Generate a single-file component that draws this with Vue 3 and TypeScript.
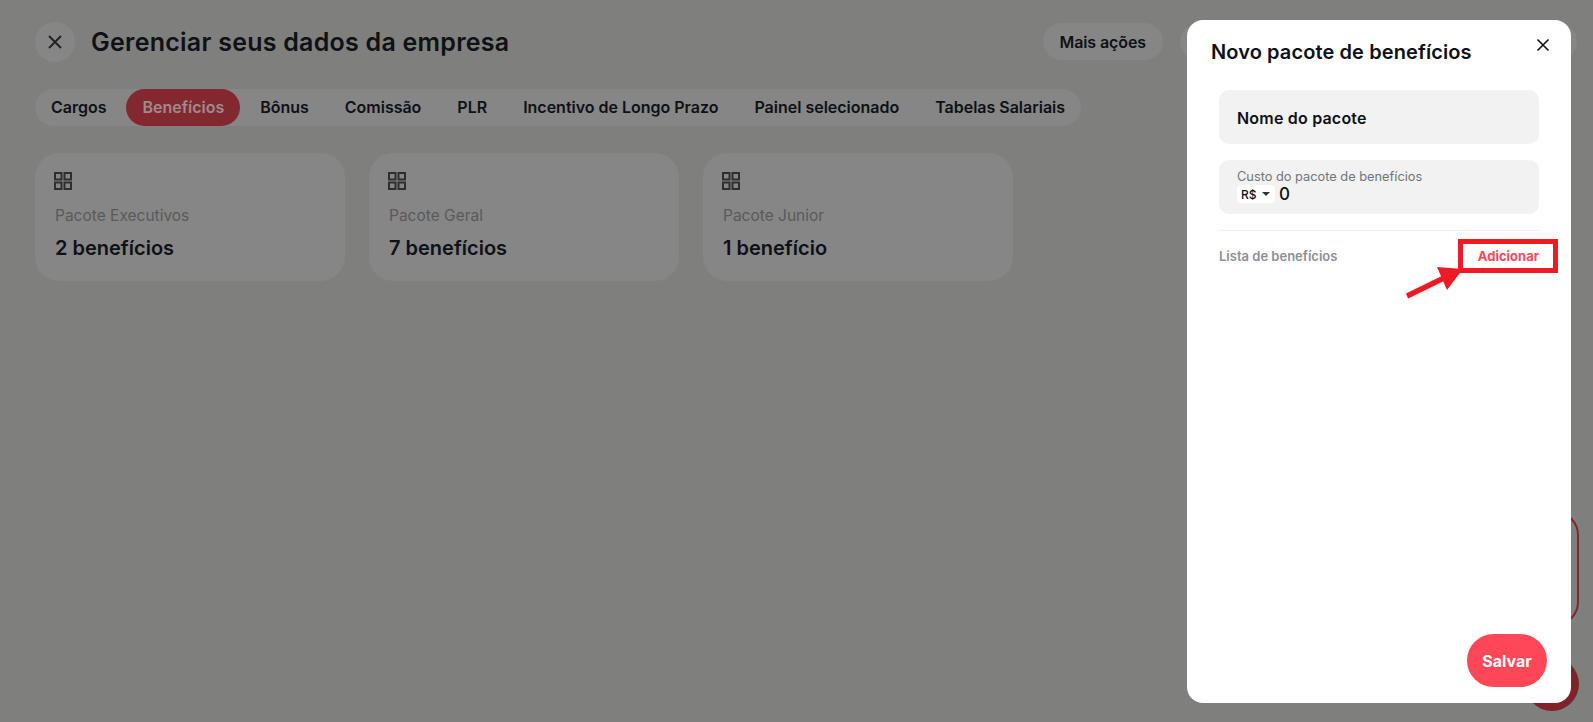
<template>
  <div class="page">
    <header class="top">
      <button class="round-close" aria-label="Fechar">
        <svg width="16" height="16" viewBox="0 0 16 16"><path d="M2 2l12 12M14 2L2 14" /></svg>
      </button>
      <h1 class="title">Gerenciar seus dados da empresa</h1>
      <button class="action">Mais ações</button>
      <button class="action wide" aria-hidden="true"></button>
    </header>

    <nav class="tabs">
      <button v-for="tab in tabs" :key="tab" class="tab" :class="{ active: tab === activeTab }">{{ tab }}</button>
    </nav>

    <section class="cards">
      <article v-for="item in packages" :key="item.name" class="card">
        <svg class="grid-icon" width="18" height="18" viewBox="0 0 18 18">
          <rect x="1" y="1" width="6.5" height="6.5" />
          <rect x="10.5" y="1" width="6.5" height="6.5" />
          <rect x="1" y="10.5" width="6.5" height="6.5" />
          <rect x="10.5" y="10.5" width="6.5" height="6.5" />
        </svg>
        <p class="card-name">{{ item.name }}</p>
        <p class="card-count">{{ item.count }}</p>
      </article>
    </section>

    <div class="behind-outline"></div>
    <div class="behind-fab"></div>

    <div class="overlay">
      <aside class="modal">
        <div class="modal-head">
          <h2>Novo pacote de benefícios</h2>
          <button class="modal-close" aria-label="Fechar">
            <svg width="14" height="14" viewBox="0 0 14 14"><path d="M1.5 1.5l11 11M12.5 1.5l-11 11" /></svg>
          </button>
        </div>

        <div class="modal-body">
          <div class="field name-field">Nome do pacote</div>
          <div class="field cost-field">
            <span class="cost-label">Custo do pacote de benefícios</span>
            <div class="cost-row">
              <span class="currency">R$<i class="caret"></i></span>
              <span class="cost-value">0</span>
            </div>
          </div>
          <div class="list-head">
            <span class="list-title">Lista de benefícios</span>
            <span class="add">Adicionar</span>
          </div>
        </div>

        <div class="modal-foot">
          <button class="save">Salvar</button>
        </div>

        <!-- marcação vermelha por cima do print -->
        <div class="mark-box"></div>
        <svg class="mark-arrow" width="80" height="50" viewBox="0 0 80 50">
          <path class="shaft" d="M1 44L40 25" />
          <path class="head" d="M31 15L57 17L41 38Z" />
        </svg>
      </aside>
    </div>
  </div>
</template>

<script setup lang="ts">
const tabs: string[] = [
  'Cargos',
  'Benefícios',
  'Bônus',
  'Comissão',
  'PLR',
  'Incentivo de Longo Prazo',
  'Painel selecionado',
  'Tabelas Salariais'
]
const activeTab = 'Benefícios'

const packages = [
  { name: 'Pacote Executivos', count: '2 benefícios' },
  { name: 'Pacote Geral', count: '7 benefícios' },
  { name: 'Pacote Junior', count: '1 benefício' }
]
</script>

<style>
html,
body {
  margin: 0;
  overflow: hidden;
  background: #7f7f7d;
}
</style>

<style scoped>
.page {
  position: relative;
  height: 722px;
  box-sizing: border-box;
  padding: 22px 16px 0 35px;
  background: #7f7f7d;
  color: #0e1116;
  font-family: Inter, "Noto Sans", sans-serif;
}

button {
  font-family: inherit;
  color: inherit;
  border: none;
  cursor: pointer;
}

.top {
  display: flex;
  align-items: flex-start;
  height: 40px;
}

.round-close {
  width: 40px;
  height: 40px;
  padding: 0;
  border-radius: 50%;
  background: #868686;
  display: flex;
  align-items: center;
  justify-content: center;
}

.round-close path {
  fill: none;
  stroke: #1f2024;
  stroke-width: 1.8;
}

.title {
  margin: 0 auto 0 16px;
  font-size: 25px;
  line-height: 40px;
  font-weight: 600;
  letter-spacing: 0.25px;
}

.action {
  height: 37px;
  margin-top: 1px;
  padding: 0 17px;
  border-radius: 19px;
  background: #868686;
  font-size: 16px;
  font-weight: 600;
  letter-spacing: -0.1px;
}

.action.wide {
  width: 397px;
  margin-left: 17px;
  padding: 0;
}

.tabs {
  display: inline-flex;
  gap: 4px;
  margin-top: 27px;
  background: #868686;
  border-radius: 19px;
  height: 37px;
}

.tab {
  padding: 0 16px 1px;
  height: 37px;
  border-radius: 19px;
  background: transparent;
  font-size: 16px;
  font-weight: 600;
  letter-spacing: -0.01px;
  white-space: nowrap;
}

.tab.active {
  background: #842830;
  color: #a08a8c;
}

.cards {
  display: flex;
  gap: 24px;
  margin-top: 27px;
}

.card {
  width: 310px;
  height: 128px;
  box-sizing: border-box;
  padding: 19px 19px 0;
  background: #868686;
  border-radius: 24px;
}

.grid-icon {
  display: block;
}

.grid-icon rect {
  fill: none;
  stroke: #2e2e30;
  stroke-width: 2;
}

.card-name {
  margin: 16px 0 0 1px;
  font-size: 15.5px;
  line-height: 20px;
  color: #5a5a5a;
}

.card-count {
  margin: 9px 0 0 1px;
  font-size: 20px;
  line-height: 26px;
  font-weight: 600;
}

.behind-outline {
  position: absolute;
  right: 14px;
  top: 511px;
  width: 200px;
  height: 115px;
  box-sizing: border-box;
  border: 2px solid #84262e;
  border-radius: 24px;
}

.behind-fab {
  position: absolute;
  right: 14px;
  top: 657px;
  width: 54px;
  height: 54px;
  border-radius: 50%;
  background: #7f2229;
}

.overlay {
  position: absolute;
  inset: 0;
  display: flex;
  justify-content: flex-end;
  align-items: flex-start;
  padding: 20px 22px 0 0;
}

.modal {
  position: relative;
  width: 384px;
  height: 683px;
  display: flex;
  flex-direction: column;
  background: #fff;
  border-radius: 16px;
}

.modal-head {
  display: flex;
  align-items: flex-start;
  justify-content: space-between;
  padding: 18px 21px 0 24px;
}

.modal-head h2 {
  margin: 0;
  font-size: 20px;
  line-height: 26px;
  font-weight: 600;
  letter-spacing: 0.1px;
  padding-top: 1px;
}

.modal-close {
  width: 14px;
  height: 14px;
  padding: 0;
  background: none;
}

.modal-close path {
  fill: none;
  stroke: #111;
  stroke-width: 1.6;
}

.modal-body {
  padding: 25px 32px 0;
}

.field {
  background: #f2f2f2;
  border-radius: 10px;
  height: 54px;
  box-sizing: border-box;
  padding: 0 18px;
}

.name-field {
  display: flex;
  align-items: center;
  font-size: 16px;
  font-weight: 600;
  letter-spacing: 0.2px;
  padding-top: 1px;
}

.cost-field {
  margin-top: 16px;
  padding-top: 9px;
}

.cost-label {
  display: block;
  font-size: 12.8px;
  line-height: 15px;
  color: #71757b;
}

.cost-row {
  display: flex;
  align-items: center;
  gap: 4px;
  margin-top: 1px;
}

.currency {
  display: flex;
  align-items: center;
  gap: 5px;
  width: 38px;
  height: 18px;
  box-sizing: border-box;
  padding-left: 4px;
  background: #fff;
  border-radius: 4px;
  font-size: 12px;
  font-weight: 500;
}

.caret {
  width: 0;
  height: 0;
  border-left: 4px solid transparent;
  border-right: 4px solid transparent;
  border-top: 4px solid #333;
}

.cost-value {
  font-size: 17px;
  font-weight: 500;
  line-height: 18px;
}

.list-head {
  display: flex;
  align-items: center;
  justify-content: space-between;
  margin-top: 16px;
  padding-top: 16px;
  border-top: 1px solid #f0f0f0;
  font-size: 13px;
  line-height: 18px;
  font-weight: 600;
}

.list-title {
  color: #8c8f95;
}

.add {
  color: #ff4757;
  font-weight: 700;
}

.modal-foot {
  margin-top: auto;
  padding: 0 24px 16px;
  display: flex;
  justify-content: flex-end;
}

.save {
  width: 80px;
  height: 53px;
  border-radius: 27px;
  background: #ff4757;
  color: #fff;
  font-size: 16px;
  font-weight: 700;
}

.mark-box {
  position: absolute;
  left: 271px;
  top: 219px;
  width: 100px;
  height: 34px;
  box-sizing: border-box;
  border: 5px solid #ed1c24;
}

.mark-arrow {
  position: absolute;
  left: 219px;
  top: 232px;
}

.shaft {
  fill: none;
  stroke: #ed1c24;
  stroke-width: 5.5;
}

.head {
  fill: #ed1c24;
}
</style>
